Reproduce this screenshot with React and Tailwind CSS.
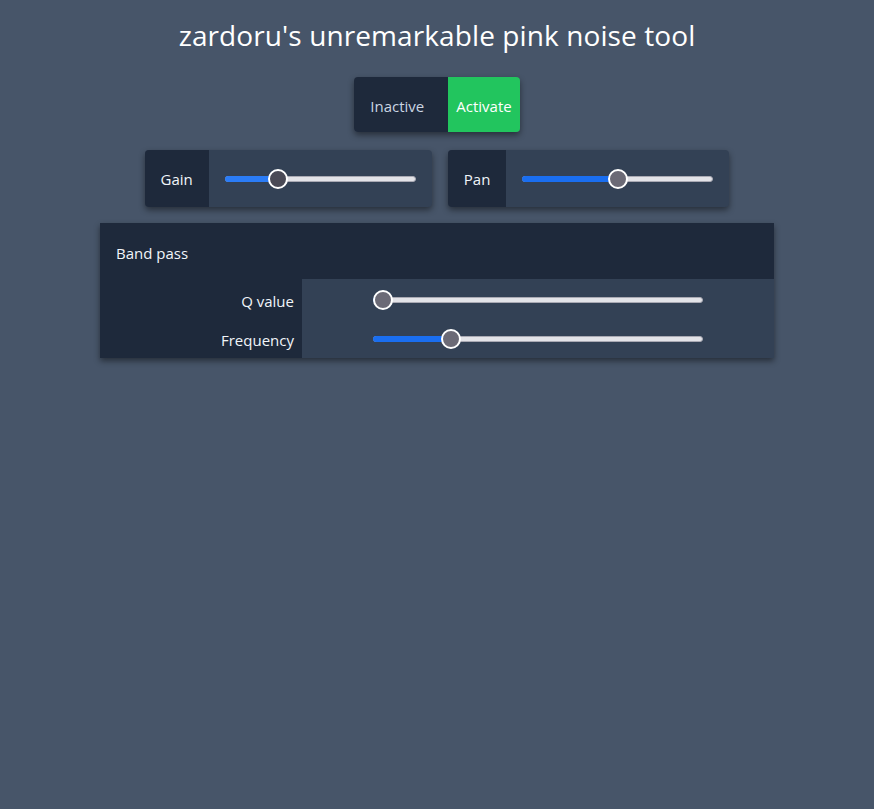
import React from "react";

function Slider({ value, width, fill = "bg-[#1a6ef0]", thumb = "bg-[#6b6a76]" }) {
  // value 0..1, thumb is 20px wide
  const left = value * (width - 20);
  return (
    <div className="relative h-5" style={{ width }}>
      <div className="absolute left-0 right-0 top-[7px] h-[6px] rounded-full bg-[#e3e3e8] border border-[#a9a9b3]" />
      <div
        className={`absolute left-0 top-[7px] h-[6px] rounded-full ${fill}`}
        style={{ width: left + 10 }}
      />
      <div
        className={`absolute top-0 h-5 w-5 rounded-full border-2 border-white ${thumb}`}
        style={{ left }}
      />
    </div>
  );
}

function ControlCard({ label, value, thumb, fill }) {
  return (
    <div className="flex h-[57px] rounded bg-[#334155] shadow-[0_3px_6px_rgba(0,0,0,0.45)] overflow-hidden">
      <div className="flex items-center bg-[#1e293b] px-4 pt-[2px] text-[15px] text-slate-100">{label}</div>
      <div className="flex items-center px-4">
        <Slider value={value} width={191} thumb={thumb} fill={fill} />
      </div>
    </div>
  );
}

export default function App() {
  return (
    <div className="min-h-[809px] bg-[#475569] font-['Open_Sans','Noto_Sans',sans-serif] text-slate-100">
      <h1 className="pt-[15px] text-center text-[28px] tracking-[0.1px] leading-[40px] text-white">
        zardoru's unremarkable pink noise tool
      </h1>

      <div className="mt-[22px] flex justify-center">
        <div className="flex h-[55px] rounded overflow-hidden shadow-[0_3px_6px_rgba(0,0,0,0.45)]">
          <div className="flex items-center bg-[#1e293b] pl-4 pr-6 pt-[3px] text-[15px] text-slate-300">Inactive</div>
          <button className="flex items-center bg-[#22c55e] px-2 pt-[3px] text-[15px] text-white">Activate</button>
        </div>
      </div>

      <div className="mt-[18px] flex justify-center gap-4">
        <ControlCard label="Gain" value={0.25} thumb="bg-[#4a4a56]" fill="bg-[#2b7cf6]" />
        <ControlCard label="Pan" value={0.5} />
      </div>

      <div className="mx-auto mt-4 w-[674px] bg-[#1e293b] shadow-[0_3px_6px_rgba(0,0,0,0.45)]">
        <div className="flex h-14 items-center px-4 pt-1 text-[15px]">Band pass</div>
        <div className="grid grid-cols-[202px_1fr]">
          <div className="flex h-[41px] items-center justify-end pr-2 pt-1 text-[15px]">Q value</div>
          <div className="flex h-[41px] items-center justify-center bg-[#334155]">
            <Slider value={0} width={330} />
          </div>
          <div className="flex h-[38px] items-center justify-end pr-2 pt-[3px] text-[15px]">Frequency</div>
          <div className="flex h-[38px] items-center justify-center bg-[#334155]">
            <Slider value={0.22} width={330} />
          </div>
        </div>
      </div>
    </div>
  );
}
